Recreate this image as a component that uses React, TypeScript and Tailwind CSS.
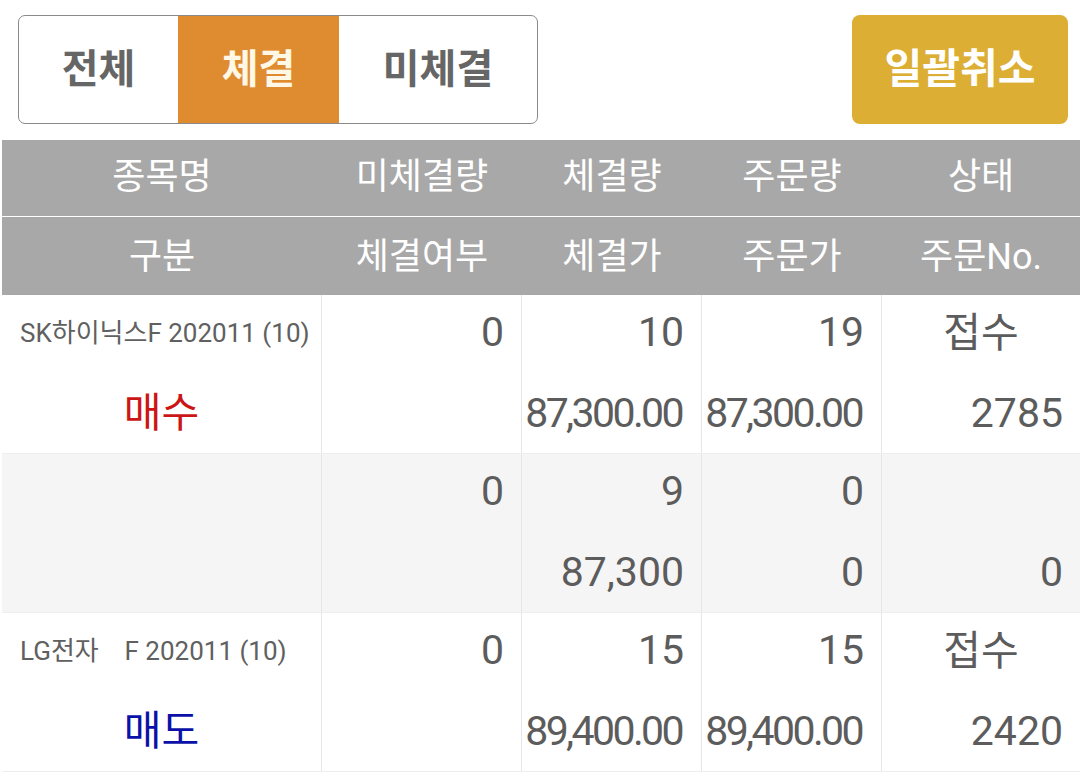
import React from 'react';

const FONT = { fontFamily: 'Roboto, "Noto Sans CJK KR", sans-serif' };

interface Cell {
  top?: string;
  bottom?: string;
}

interface OrderRow {
  name?: string;
  side?: 'buy' | 'sell';
  unfilled: string;
  filledQty: string;
  filledPrice: string;
  orderQty: string;
  orderPrice: string;
  status?: string;
  orderNo: string;
  shaded?: boolean;
}

const rows: OrderRow[] = [
  {
    name: 'SK하이닉스F 202011 (10)',
    side: 'buy',
    unfilled: '0',
    filledQty: '10',
    filledPrice: '87,300.00',
    orderQty: '19',
    orderPrice: '87,300.00',
    status: '접수',
    orderNo: '2785',
  },
  {
    unfilled: '0',
    filledQty: '9',
    filledPrice: '87,300',
    orderQty: '0',
    orderPrice: '0',
    orderNo: '0',
    shaded: true,
  },
  {
    name: 'LG전자    F 202011 (10)',
    side: 'sell',
    unfilled: '0',
    filledQty: '15',
    filledPrice: '89,400.00',
    orderQty: '15',
    orderPrice: '89,400.00',
    status: '접수',
    orderNo: '2420',
  },
];

const GRID = 'grid grid-cols-[320px_200px_180px_180px_1fr]';

// long prices are squeezed a little so they fit the 180px column
const priceClass = (v: string) => (v.includes('.') ? 'tracking-[-2.6px] pr-[19px]' : 'pr-[17px]');

const NumCell = ({ top, bottom }: Cell) => (
  <div className="flex flex-col border-r border-[#e6e6e6]">
    <div className="h-[80px] flex items-center justify-end pb-[5px] pr-[17px] text-[41px] text-[#5c5c5c]">
      {top}
    </div>
    <div
      className={`h-[78px] flex items-center justify-end text-[41px] text-[#5c5c5c] ${
        bottom ? priceClass(bottom) : ''
      }`}
    >
      {bottom}
    </div>
  </div>
);

const Tabs = () => (
  <div className="flex h-[109px] w-[520px] rounded-[7px] border border-[#8a8a8a] overflow-hidden">
    <div className="w-[159px] flex items-center justify-center text-[40px] font-bold text-[#666666]">
      전체
    </div>
    <div className="w-[161px] flex items-center justify-center bg-[#df8c30] text-[40px] font-bold text-[#fff8e6]">
      체결
    </div>
    <div className="flex-1 flex items-center justify-center text-[40px] font-bold text-[#666666]">
      미체결
    </div>
  </div>
);

const Header = () => (
  <div className="bg-[#a8a8a8] text-white text-[36px]">
    <div className={`${GRID} h-[77px] border-b border-white`}>
      {['종목명', '미체결량', '체결량', '주문량', '상태'].map((h) => (
        <div key={h} className="flex items-center justify-center pb-[2px]">
          {h}
        </div>
      ))}
    </div>
    <div className={`${GRID} h-[78px]`}>
      {['구분', '체결여부', '체결가', '주문가', '주문No.'].map((h) => (
        <div key={h} className="flex items-center justify-center pt-[2px]">
          {h}
        </div>
      ))}
    </div>
  </div>
);

const Row = ({ row }: { row: OrderRow }) => (
  <div className={`${GRID} h-[159px] ${row.shaded ? 'bg-[#f5f5f5]' : 'bg-white'} border-b border-[#eeeeee]`}>
    <div className="flex flex-col border-r border-[#e6e6e6]">
      <div className="h-[80px] flex items-center pl-[18px] pb-[3px] text-[26px] text-[#606060] whitespace-pre">
        {row.name}
      </div>
      <div
        className={`h-[78px] flex items-center justify-center text-[41px] ${
          row.side === 'buy' ? 'text-[#cc1515]' : 'text-[#0b11a8]'
        }`}
      >
        {row.side === 'buy' ? '매수' : row.side === 'sell' ? '매도' : ''}
      </div>
    </div>
    <NumCell top={row.unfilled} />
    <NumCell top={row.filledQty} bottom={row.filledPrice} />
    <NumCell top={row.orderQty} bottom={row.orderPrice} />
    <div className="flex flex-col">
      <div className="h-[80px] flex items-center justify-center pb-[3px] text-[41px] text-[#5c5c5c]">
        {row.status}
      </div>
      <div className="h-[78px] flex items-center justify-end pr-[17px] text-[41px] text-[#5c5c5c]">
        {row.orderNo}
      </div>
    </div>
  </div>
);

export default function App() {
  return (
    <div className="w-[1080px] h-[776px] bg-white overflow-hidden" style={FONT}>
      <div className="flex items-center justify-between pl-[18px] pr-[12px] pt-[15px]">
        <Tabs />
        <button
          type="button"
          className="w-[216px] h-[109px] rounded-[8px] bg-[#dcae33] text-white text-[41px] font-bold flex items-center justify-center"
        >
          일괄취소
        </button>
      </div>
      <div className="ml-[2px] mt-[16px]">
        <Header />
        {rows.map((r, i) => (
          <Row key={i} row={r} />
        ))}
      </div>
    </div>
  );
}
